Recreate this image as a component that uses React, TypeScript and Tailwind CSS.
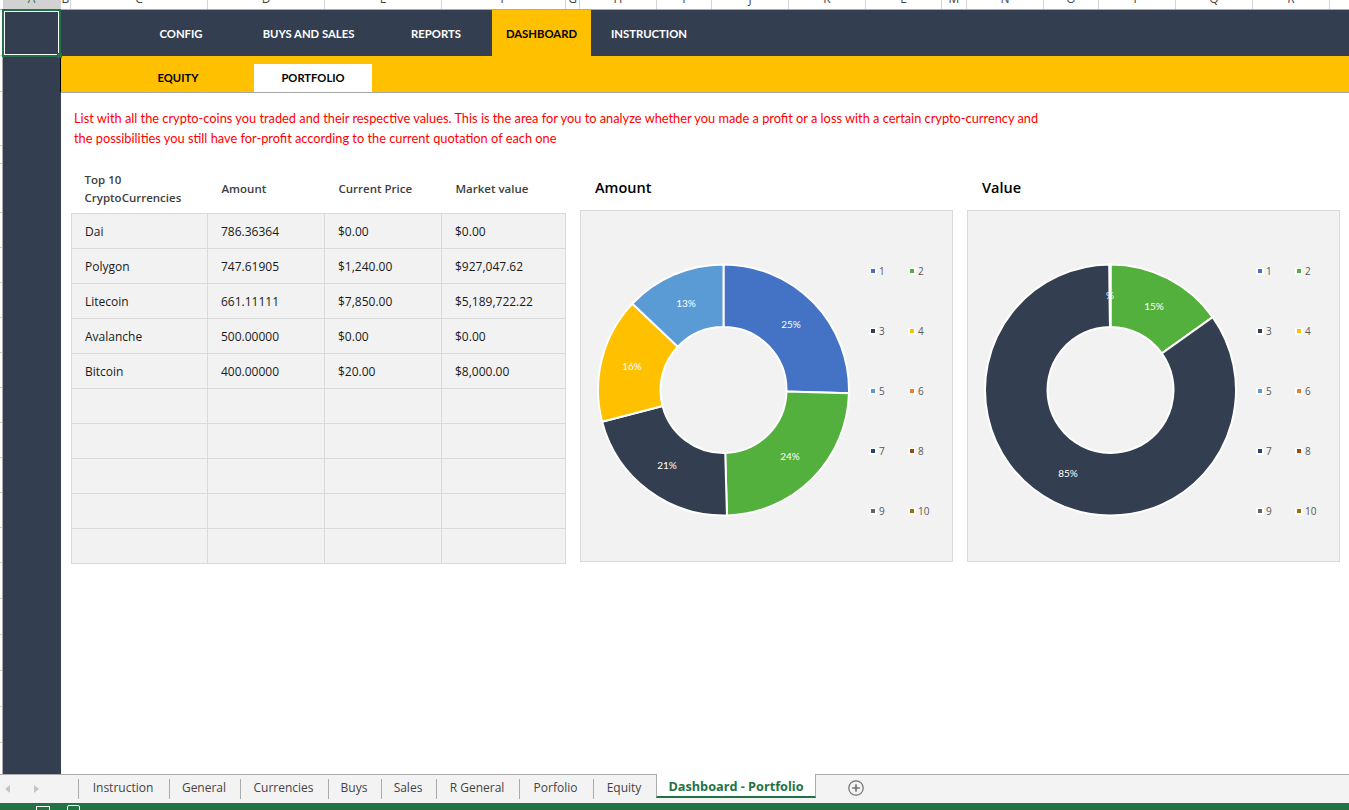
const columns = [
  { name: "A", w: 58, active: true },
  { name: "B", w: 10 },
  { name: "C", w: 137 },
  { name: "D", w: 117 },
  { name: "E", w: 117 },
  { name: "F", w: 124 },
  { name: "G", w: 14 },
  { name: "H", w: 77 },
  { name: "I", w: 55 },
  { name: "J", w: 77 },
  { name: "K", w: 77 },
  { name: "L", w: 76 },
  { name: "M", w: 25 },
  { name: "N", w: 77 },
  { name: "O", w: 55 },
  { name: "P", w: 77 },
  { name: "Q", w: 77 },
  { name: "R", w: 77 },
];

// spreadsheet row heights, for the ticks in the row gutter
const rowHeights = [46, 36, 54, 18, 49, 35, 35, 35, 35, 35, 35, 35, 35, 35, 35, 36, 36, 36, 36, 36];

const rows = [
  ["Dai", "786.36364", "$0.00", "$0.00"],
  ["Polygon", "747.61905", "$1,240.00", "$927,047.62"],
  ["Litecoin", "661.11111", "$7,850.00", "$5,189,722.22"],
  ["Avalanche", "500.00000", "$0.00", "$0.00"],
  ["Bitcoin", "400.00000", "$20.00", "$8,000.00"],
  ["", "", "", ""],
  ["", "", "", ""],
  ["", "", "", ""],
  ["", "", "", ""],
  ["", "", "", ""],
];

const legend = [
  { n: 1, c: "bg-[#4472c4]" },
  { n: 2, c: "bg-[#54b03c]" },
  { n: 3, c: "bg-[#333f50]" },
  { n: 4, c: "bg-[#ffc000]" },
  { n: 5, c: "bg-[#5b9bd5]" },
  { n: 6, c: "bg-[#ed7d31]" },
  { n: 7, c: "bg-[#264478]" },
  { n: 8, c: "bg-[#9e480e]" },
  { n: 9, c: "bg-[#636363]" },
  { n: 10, c: "bg-[#997300]" },
];

const tabs = [
  { name: "Instruction", w: 91 },
  { name: "General", w: 71 },
  { name: "Currencies", w: 88 },
  { name: "Buys", w: 53 },
  { name: "Sales", w: 55 },
  { name: "R General", w: 83 },
  { name: "Porfolio", w: 74 },
  { name: "Equity", w: 63 },
];

type Label = { text: string; x: number; y: number };

function slicePath(start: number, end: number) {
  const cx = 126.5;
  const cy = 127;
  const R = 125.5;
  const r = 63;
  const pt = (rad: number, a: number) => {
    const t = ((a - 90) * Math.PI) / 180;
    return `${cx + rad * Math.cos(t)} ${cy + rad * Math.sin(t)}`;
  };
  const large = end - start > 180 ? 1 : 0;
  return `M${pt(R, start)} A${R} ${R} 0 ${large} 1 ${pt(R, end)} L${pt(r, end)} A${r} ${r} 0 ${large} 0 ${pt(r, start)} Z`;
}

function Donut({ values, colors, labels }: { values: number[]; colors: string[]; labels: Label[] }) {
  const total = values.reduce((a, b) => a + b, 0);
  let angle = 0;
  return (
    <svg width="254" height="254" viewBox="0 0 254 254" className="shrink-0">
      {values.map((v, i) => {
        const start = angle;
        angle += (v / total) * 360;
        return <path key={i} d={slicePath(start, angle)} fill={colors[i]} stroke="#ffffff" strokeWidth="2" />;
      })}
      {labels.map((l) => (
        <text key={l.text + l.x} x={l.x} y={l.y} textAnchor="middle" dominantBaseline="central" fill="#ffffff" fontSize="10" fontFamily="Lato, sans-serif">
          {l.text}
        </text>
      ))}
    </svg>
  );
}

function ChartCard({ title, children, className }: { title: string; children: React.ReactNode; className: string }) {
  return (
    <div className={className}>
      <h3 className="h-[47px] pl-[15px] pt-[15px] text-[14.5px] leading-[20px] font-semibold text-black">{title}</h3>
      <div className="flex h-[352px] border border-[#d9d9d9] bg-[#f2f2f2] pl-[16px]">
        <div className="mt-[52px]">{children}</div>
        <div className="mt-[30px] ml-[18px] grid h-[300px] grid-cols-[39px_39px] grid-rows-[repeat(5,60px)]">
          {legend.map((l) => (
            <div key={l.n} className="flex items-center text-[10px] text-[#595959]">
              <span className="mr-[2px] flex h-[7px] w-[8px] items-center justify-center bg-white">
                <span className={`h-[4px] w-[4px] ${l.c}`} />
              </span>
              {l.n}
            </div>
          ))}
        </div>
      </div>
    </div>
  );
}

export default function App() {
  return (
    <div className="flex h-[810px] w-[1349px] flex-col overflow-hidden bg-white font-['Open_Sans',sans-serif]">
      {/* column letters, cut off at the top like the window */}
      <div className="flex h-[10px] shrink-0 border-b border-[#ababab] bg-white pl-[3px]">
        {columns.map((c) => (
          <div
            key={c.name}
            style={{ width: c.w }}
            className={`flex shrink-0 items-end justify-center overflow-hidden border-r border-[#d4d4d4] pb-[3px] text-[12px] leading-[14px] ${c.active ? "bg-[#d2d2d2] text-[#217346]" : "text-[#444444]"}`}
          >
            {c.name}
          </div>
        ))}
      </div>

      <div className="relative flex min-h-0 flex-1">
        <div className="w-[3px] shrink-0 overflow-hidden border-r border-[#ababab] bg-white">
          {rowHeights.map((h, i) => (
            <div key={i} style={{ height: h }} className="border-b border-[#d0d0d0]" />
          ))}
        </div>
        <div className="w-[58px] shrink-0 bg-[#333f50]" />

        <div className="min-w-0 flex-1">
          <nav className="flex h-[46px] items-center bg-[#333f50] pl-[64px] font-['Lato',sans-serif] text-[11.3px] font-bold text-white">
            <a className="w-[112px] pt-[2px] text-center">CONFIG</a>
            <a className="w-[143px] pt-[2px] text-center">BUYS AND SALES</a>
            <a className="w-[112px] pt-[2px] text-center">REPORTS</a>
            <a className="flex h-full w-[99px] items-center justify-center bg-[#ffc000] pt-[2px] text-black">DASHBOARD</a>
            <a className="w-[116px] pt-[2px] text-center">INSTRUCTION</a>
          </nav>
          <div className="flex h-[37px] border-b border-[#a6a6a6] bg-[#ffc000] pl-[41px] font-['Lato',sans-serif] text-[11.2px] font-bold text-black">
            <a className="flex w-[152px] items-center justify-center pt-[9px]">EQUITY</a>
            <a className="mt-[8px] flex w-[118px] items-center justify-center bg-white pt-[1px]">PORTFOLIO</a>
          </div>

          <p className="mt-[15px] ml-[13px] w-[980px] font-['Lato',sans-serif] text-[12.8px] leading-[20px] text-[#ff0000]">
            List with all the crypto-coins you traded and their respective values. This is the area for you to analyze whether you made a profit or a loss with a certain crypto-currency and
            <br />
            the possibilities you still have for-profit according to the current quotation of each one
          </p>

          <div className="mt-[15px] ml-[10px] flex items-start">
            <table className="w-[495px] table-fixed border-collapse text-[12px] text-[#1a1a1a]">
              <thead>
                <tr className="h-[50px] text-left font-semibold text-[#404040]">
                  <th className="w-[136px] pt-[2px] pl-[13px] text-[11.5px] leading-[18px] font-semibold">Top 10<br />CryptoCurrencies</th>
                  <th className="w-[117px] pt-[2px] pl-[14px] text-[11.5px] font-semibold">Amount</th>
                  <th className="w-[117px] pt-[2px] pl-[14px] text-[11.5px] font-semibold">Current Price</th>
                  <th className="pt-[2px] pl-[14px] text-[11.5px] font-semibold">Market value</th>
                </tr>
              </thead>
              <tbody>
                {rows.map((r, i) => (
                  <tr key={i} className="h-[35px] bg-[#f2f2f2]">
                    {r.map((cell, j) => (
                      <td key={j} className="border border-[#d9d9d9] pt-[2px] pl-[13px]">{cell}</td>
                    ))}
                  </tr>
                ))}
              </tbody>
            </table>

            <ChartCard title="Amount" className="ml-[14px] w-[373px]">
              <Donut
                values={[786.36364, 747.61905, 661.11111, 500, 400]}
                colors={["#4472c4", "#54b03c", "#333f50", "#ffc000", "#5b9bd5"]}
                labels={[
                  { text: "25%", x: 194, y: 61 },
                  { text: "24%", x: 193, y: 193 },
                  { text: "21%", x: 70, y: 202 },
                  { text: "16%", x: 35, y: 103 },
                  { text: "13%", x: 89, y: 40 },
                ]}
              />
            </ChartCard>
            <ChartCard title="Value" className="ml-[14px] w-[373px]">
              <Donut
                values={[927047.62, 5189722.22, 8000]}
                colors={["#54b03c", "#333f50", "#5b9bd5"]}
                labels={[
                  { text: "15%", x: 170, y: 43 },
                  { text: "85%", x: 84, y: 210 },
                  { text: "%", x: 126, y: 32 },
                ]}
              />
            </ChartCard>
          </div>
        </div>

        {/* black edge between the gutter column and the yellow band */}
        <div className="absolute top-[46px] left-[60px] h-[36px] w-px bg-black" />

        {/* selected cell A1 */}
        <div className="absolute -top-px left-[2px] h-[48px] w-[59px] border-2 border-[#217346]">
          <div className="h-full w-full border border-white" />
          <span className="absolute -right-[3px] -bottom-[3px] h-[5px] w-[5px] bg-[#217346]" />
        </div>
      </div>

      {/* sheet tabs */}
      <div className="relative flex h-[29px] shrink-0 border-t border-[#ababab] bg-[#f3f3f3] text-[12px] text-[#444444]">
        <div className="flex w-[78px] shrink-0 items-center pl-[5px]">
          <span className="h-0 w-0 border-y-[4px] border-r-[5px] border-y-transparent border-r-[#c4c4c4]" />
          <span className="ml-[24px] h-0 w-0 border-y-[4px] border-l-[5px] border-y-transparent border-l-[#c4c4c4]" />
        </div>
        {tabs.map((t) => (
          <div key={t.name} style={{ width: t.w }} className="my-[4px] flex shrink-0 items-center justify-center border-l border-[#ababab] pr-[2px] pb-[2px]">
            {t.name}
          </div>
        ))}
        <div className="-mt-px flex h-[24px] w-[160px] shrink-0 items-center justify-center border-x border-b-[2px] border-x-[#ababab] border-b-[#217346] bg-white pt-[4px] text-[12.7px] font-bold text-[#217346]">
          Dashboard - Portfolio
        </div>
        <div className="ml-[32px] flex items-center pb-[2px]">
          <svg width="16" height="16" viewBox="0 0 16 16" fill="none" stroke="#707070" strokeWidth="1.2">
            <circle cx="8" cy="8" r="7.2" />
            <path d="M8 4.2v7.6M4.2 8h7.6" strokeWidth="1.6" />
          </svg>
        </div>
      </div>

      {/* status bar, only the top of its icons shows */}
      <div className="flex h-[7px] shrink-0 overflow-hidden bg-[#217346] pl-[36px]">
        <span className="mt-[3px] h-[10px] w-[14px] border border-white" />
        <span className="mt-[2px] ml-[17px] h-[10px] w-[13px] rounded-t-[2px] border border-white" />
      </div>
    </div>
  );
}
